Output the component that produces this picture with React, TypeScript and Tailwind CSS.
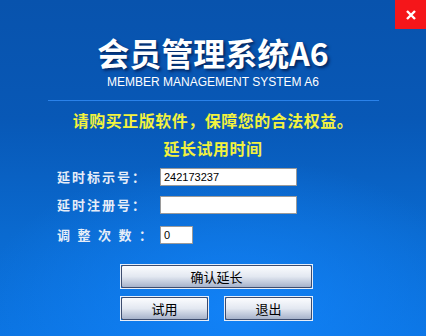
import React from "react";

const cjk = "font-['Noto_Sans_CJK_SC','Noto_Sans',sans-serif]";

function Btn({ children, w }: { children: React.ReactNode; w: string }) {
  return (
    <div className={`${w} h-[25px] border border-[#e8eef8] p-0`}>
      <div className="w-full h-full border border-[#3d4c6e] rounded-[2px] bg-gradient-to-b from-[#fbfcfe] via-[#e3e8f1] to-[#a7b3cb] flex items-center justify-center">
        <span className={`${cjk} text-[13px] leading-none text-black`}>{children}</span>
      </div>
    </div>
  );
}

export default function App() {
  return (
    <div className="relative w-[426px] h-[336px] overflow-hidden bg-[linear-gradient(180deg,#0853ad_0%,#0858b6_35%,#0a6ad0_70%,#0b74e2_100%)]">
      <div className="absolute inset-0 bg-[radial-gradient(ellipse_60%_45%_at_55%_92%,rgba(20,135,255,0.75),rgba(20,135,255,0)_100%)]" />
      <div className="absolute top-0 right-0 w-[31px] h-[29px] bg-[#f5161a] flex items-center justify-center">
        <svg width="12" height="12" viewBox="0 0 12 12">
          <path d="M2 2 L10 10 M10 2 L2 10" stroke="white" strokeWidth="2.4" />
        </svg>
      </div>
      <div className="relative flex flex-col items-center pt-[36px]">
        <div className={`${cjk} h-[32px] leading-[32px] text-[32px] font-bold text-white [text-shadow:2px_2px_3px_rgba(0,10,50,0.65)]`}>
          会员管理系统A6
        </div>
        <div className="mt-[6px] h-[16px] leading-[16px] text-[12px] text-white font-['Liberation_Sans',sans-serif]">
          MEMBER MANAGEMENT SYSTEM A6
        </div>
        <div className="mt-[10px] w-[331px] h-px bg-[#2a82ea]" />
        <div className={`${cjk} mt-[9px] h-[20px] leading-[20px] text-[16px] font-bold tracking-[0.5px] text-[#f2f23e]`}>
          请购买正版软件，保障您的合法权益。
        </div>
        <div className={`${cjk} mt-[8px] h-[20px] leading-[20px] text-[16px] font-bold tracking-[0.5px] text-[#f2f23e]`}>
          延长试用时间
        </div>
        <div className="self-stretch mt-[10px] flex flex-col">
          <div className="flex items-center pl-[57px] h-[18px]">
            <span className={`${cjk} w-[103px] text-[13px] text-[#e6edf8] font-bold tracking-[2px]`}>延时标示号：</span>
            <div className="w-[137px] h-[18px] bg-white border border-[#9a9a9a] flex items-center pl-[3px] text-[11px] text-black font-['Liberation_Sans',sans-serif]">
              242173237
            </div>
          </div>
          <div className="flex items-center pl-[57px] h-[18px] mt-[10px]">
            <span className={`${cjk} w-[103px] text-[13px] text-[#e6edf8] font-bold tracking-[2px]`}>延时注册号：</span>
            <div className="w-[137px] h-[18px] bg-white border border-[#9a9a9a]" />
          </div>
          <div className="flex items-center pl-[57px] h-[18px] mt-[12px]">
            <span className={`${cjk} w-[103px] text-[13px] text-[#e6edf8] font-bold tracking-[7.5px]`}>调整次数：</span>
            <div className="w-[33px] h-[18px] bg-white border border-[#9a9a9a] flex items-center pl-[3px] text-[11px] text-black font-['Liberation_Sans',sans-serif]">
              0
            </div>
          </div>
        </div>
        <div className="self-stretch pl-[120px] mt-[20px] flex flex-col gap-[7px]">
          <Btn w="w-[193px]">确认延长</Btn>
          <div className="flex gap-[15px]">
            <Btn w="w-[89px]">试用</Btn>
            <Btn w="w-[89px]">退出</Btn>
          </div>
        </div>
      </div>
    </div>
  );
}
